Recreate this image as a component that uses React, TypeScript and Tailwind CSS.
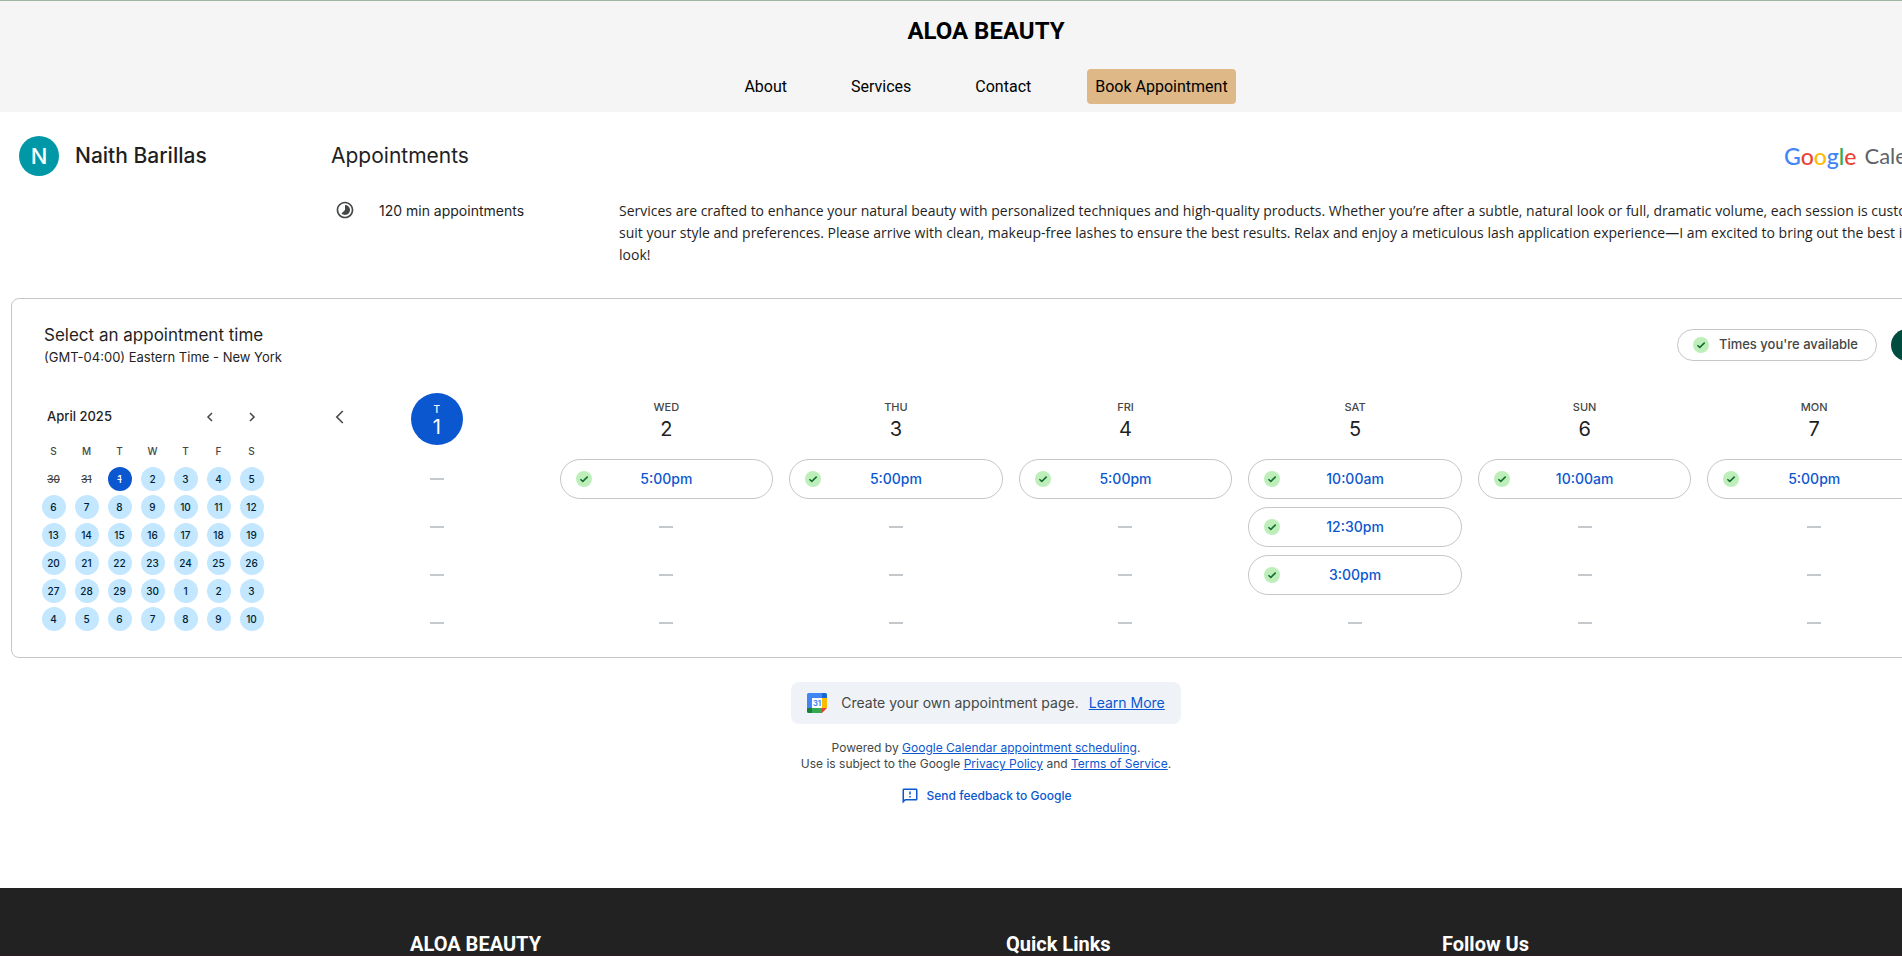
import React from "react";
import { MdTimelapse, MdOutlineFeedback } from "react-icons/md";

const WEEKDAYS = ["S", "M", "T", "W", "T", "F", "S"];

type MiniDay = { day: number; state: "past" | "selected" | "open" };

const MINI_DAYS: MiniDay[] = [
  { day: 30, state: "past" },
  { day: 31, state: "past" },
  { day: 1, state: "selected" },
  ...Array.from({ length: 29 }, (_, i): MiniDay => ({ day: i + 2, state: "open" })),
  ...Array.from({ length: 10 }, (_, i): MiniDay => ({ day: i + 1, state: "open" })),
];

const MINI_STYLES: Record<MiniDay["state"], string> = {
  past: "text-[#444746] line-through",
  selected: "bg-[#0b57d0] text-white line-through",
  open: "bg-[#c2e7ff] text-[#001d35]",
};

const DAYS: { name: string; date: number; today?: boolean; slots: (string | null)[] }[] = [
  { name: "T", date: 1, today: true, slots: [null, null, null, null] },
  { name: "WED", date: 2, slots: ["5:00pm", null, null, null] },
  { name: "THU", date: 3, slots: ["5:00pm", null, null, null] },
  { name: "FRI", date: 4, slots: ["5:00pm", null, null, null] },
  { name: "SAT", date: 5, slots: ["10:00am", "12:30pm", "3:00pm", null] },
  { name: "SUN", date: 6, slots: ["10:00am", null, null, null] },
  { name: "MON", date: 7, slots: ["5:00pm", null, null, null] },
];

function CheckBadge() {
  return (
    <svg className="size-4 shrink-0" viewBox="0 0 16 16" aria-hidden="true">
      <circle cx="8" cy="8" r="8" fill="#beefbb" />
      <path d="M4.4 8.2 L6.8 10.4 L11.7 5.6" fill="none" stroke="#146c2e" strokeWidth="1.5" />
    </svg>
  );
}

function Chevron({ right = false }: { right?: boolean }) {
  return (
    <svg className="size-3" viewBox="0 0 12 12" aria-hidden="true">
      <path
        d={right ? "M4 2 L8 6 L4 10" : "M8 2 L4 6 L8 10"}
        fill="none"
        stroke="#444746"
        strokeWidth="1.5"
      />
    </svg>
  );
}

function CalendarIcon() {
  return (
    <svg className="size-5" viewBox="0 0 20 20" aria-hidden="true">
      <path d="M1.5 0H15v5H5v10H0V1.5A1.5 1.5 0 0 1 1.5 0Z" fill="#4285f4" />
      <path d="M15 0h3.5A1.5 1.5 0 0 1 20 1.5V5h-5Z" fill="#1967d2" />
      <path d="M15 5h5v10h-5Z" fill="#fbbc04" />
      <path d="M5 15h10v5H5Z" fill="#34a853" />
      <path d="M0 15h5v5H1.5A1.5 1.5 0 0 1 0 18.5Z" fill="#188038" />
      <path d="M15 15h5l-5 5Z" fill="#ea4335" />
      <path d="M5 5h10v10H5Z" fill="#fff" />
      <text
        x="10"
        y="12.8"
        textAnchor="middle"
        fontFamily="Inter, sans-serif"
        fontSize="7.5"
        fontWeight="700"
        fill="#4285f4"
      >
        31
      </text>
    </svg>
  );
}

function SiteHeader() {
  return (
    <header className="flex h-28 shrink-0 flex-col items-center border-t border-[#9fb59f] bg-[#f5f5f5] pt-3.5 font-[Roboto,sans-serif] text-black">
      <h1 className="text-2xl leading-8 font-bold">ALOA BEAUTY</h1>
      <nav className="mt-[22px] flex gap-12 text-base">
        <a href="#about" className="rounded px-2 py-1.5 leading-[23px]">About</a>
        <a href="#services" className="rounded px-2 py-1.5 leading-[23px]">Services</a>
        <a href="#contact" className="rounded px-2 py-1.5 leading-[23px]">Contact</a>
        <a href="#book" className="rounded bg-[#deb887] px-2 py-1.5 leading-[23px]">Book Appointment</a>
      </nav>
    </header>
  );
}

function Intro() {
  return (
    <section className="grid grid-cols-[312px_1fr] pt-6 pr-6 pl-[19px]">
      <div className="flex h-10 items-center gap-4">
        <div className="flex size-10 items-center justify-center rounded-full bg-[#0097a7] text-[22px] font-medium text-white">
          N
        </div>
        <h2 className="text-[21px] font-medium">Naith Barillas</h2>
      </div>
      <div>
        <div className="flex h-10 items-center justify-between">
          <h2 className="text-[21px]">Appointments</h2>
          <div className="flex w-[164px] items-center gap-2">
            <span className="font-[Lato,sans-serif] text-[23px] leading-7 font-medium">
              <span className="text-[#4285f4]">G</span>
              <span className="text-[#ea4335]">o</span>
              <span className="text-[#fbbc04]">o</span>
              <span className="text-[#4285f4]">g</span>
              <span className="text-[#34a853]">l</span>
              <span className="text-[#ea4335]">e</span>
            </span>
            <span className="font-[Lato,sans-serif] text-[22px] leading-7 text-[#5f6368]">Calendar</span>
          </div>
        </div>
        <div className="mt-6 flex">
          <div className="flex w-[288px] shrink-0 items-start text-sm leading-[21px]">
            <MdTimelapse className="ml-1 size-5 text-[#444746]" />
            <span className="ml-6">120 min appointments</span>
          </div>
          <p className="-mr-5 font-[Open_Sans,sans-serif] text-sm leading-[22px]">
            Services are crafted to enhance your natural beauty with personalized techniques and
            high-quality products. Whether you’re after a subtle, natural look or full, dramatic
            volume, each session is customized to suit your style and preferences. Please arrive
            with clean, makeup-free lashes to ensure the best results. Relax and enjoy a meticulous
            lash application experience—I am excited to bring out the best in your look!
          </p>
        </div>
      </div>
    </section>
  );
}

function MiniCalendar() {
  return (
    <div className="w-[231px] shrink-0 pt-2">
      <div className="flex h-8 items-center">
        <span className="ml-2.5 flex-1 text-[13px] font-medium">April 2025</span>
        <button type="button" aria-label="Previous month" className="flex size-8 items-center justify-center">
          <Chevron />
        </button>
        <button type="button" aria-label="Next month" className="ml-2.5 flex size-8 items-center justify-center">
          <Chevron right />
        </button>
      </div>
      <div className="mt-2 grid grid-cols-7 text-center text-[10px] leading-5 font-medium text-[#444746]">
        {WEEKDAYS.map((d, i) => (
          <span key={i}>{d}</span>
        ))}
      </div>
      <div className="mt-1.5 grid grid-cols-7 justify-items-center gap-y-1">
        {MINI_DAYS.map(({ day, state }, i) => (
          <button
            key={i}
            type="button"
            className={`flex size-6 items-center justify-center rounded-full text-[10px] font-medium ${MINI_STYLES[state]}`}
          >
            {day}
          </button>
        ))}
      </div>
    </div>
  );
}

function WeekGrid() {
  return (
    <div className="relative grid flex-1 grid-cols-7">
      <button type="button" aria-label="Previous week" className="absolute top-3 left-1.5 p-1">
        <svg className="size-4" viewBox="0 0 16 16" aria-hidden="true">
          <path d="M10.8 2 L4.8 8 L10.8 14" fill="none" stroke="#444746" strokeWidth="1.6" />
        </svg>
      </button>
      {DAYS.map(({ name, date, today, slots }) => (
        <div key={date} className="px-2">
          <div className="flex h-[66px] flex-col items-center">
            {today ? (
              <div className="flex size-13 flex-col items-center rounded-full bg-[#0b57d0] pt-2.5 text-white">
                <span className="text-[10px] leading-3 font-medium">{name}</span>
                <span className="text-xl leading-6">{date}</span>
              </div>
            ) : (
              <div className="flex flex-col items-center gap-1 pt-2">
                <span className="text-[11px] leading-3 font-medium text-[#444746]">{name}</span>
                <span className="text-xl leading-6">{date}</span>
              </div>
            )}
          </div>
          <div className="flex flex-col gap-2">
            {slots.map((slot, i) =>
              slot ? (
                <button
                  key={i}
                  type="button"
                  className="grid h-10 grid-cols-[16px_1fr_16px] items-center rounded-full border border-[#c4c7c5] px-[15px] text-sm font-medium text-[#0b57d0]"
                >
                  <CheckBadge />
                  <span>{slot}</span>
                </button>
              ) : (
                <div key={i} className="flex h-10 items-center justify-center">
                  <span className="h-0.5 w-3.5 bg-[#c4c9cd]" />
                </div>
              )
            )}
          </div>
        </div>
      ))}
    </div>
  );
}

function Scheduler() {
  return (
    <section className="mx-[11px] mt-8 rounded-lg border border-[#c4c7c5] pt-6 pr-[31px] pb-3.5">
      <div className="flex items-center pl-8">
        <div>
          <h3 className="text-[17px] leading-6">Select an appointment time</h3>
          <p className="text-[13px] leading-5">(GMT-04:00) Eastern Time - New York</p>
        </div>
        <div className="ml-auto flex items-center gap-3.5">
          <div className="flex h-8 items-center gap-2.5 rounded-full border border-[#c4c7c5] pr-[18px] pl-[15px] text-[13px] font-medium text-[#444746]">
            <CheckBadge />
            Times you're available
          </div>
          <button type="button" aria-label="Add a calendar" className="h-8 w-[38px] rounded-full bg-[#004d40]" />
        </div>
      </div>
      <div className="mt-[26px] flex gap-[54px] pl-[25px]">
        <MiniCalendar />
        <WeekGrid />
      </div>
    </section>
  );
}

function Credits() {
  return (
    <section className="flex flex-col items-center pt-6 pb-21 text-[#444746]">
      <div className="flex h-[42px] items-center rounded-lg bg-[#eff3f8] px-4 text-sm">
        <CalendarIcon />
        <span className="ml-3.5">Create your own appointment page.</span>
        <a href="#learn" className="ml-2.5 text-[#0b57d0] underline">Learn More</a>
      </div>
      <p className="mt-4 text-center text-xs leading-4">
        Powered by{" "}
        <a href="#scheduling" className="text-[#0b57d0] underline">Google Calendar appointment scheduling</a>.
        <br />
        Use is subject to the Google{" "}
        <a href="#privacy" className="text-[#0b57d0] underline">Privacy Policy</a> and{" "}
        <a href="#terms" className="text-[#0b57d0] underline">Terms of Service</a>.
      </p>
      <a href="#feedback" className="mt-4 flex h-4 items-center gap-2 text-xs font-medium text-[#0b57d0]">
        <MdOutlineFeedback className="size-[18px]" />
        Send feedback to Google
      </a>
    </section>
  );
}

function SiteFooter() {
  return (
    <footer className="flex min-h-0 flex-1 justify-center border-b border-[#2b1f27] bg-[#222222] pt-11 font-[Roboto,sans-serif] text-xl leading-6 font-bold text-white">
      <div className="grid w-full max-w-[1152px] grid-cols-[596px_436px_1fr]">
        <h4>ALOA BEAUTY</h4>
        <h4>Quick Links</h4>
        <h4>Follow Us</h4>
      </div>
    </footer>
  );
}

export default function App() {
  return (
    <div className="h-screen overflow-hidden bg-white font-[Inter,sans-serif] text-[#1f1f1f]">
      <div className="flex h-full w-[calc(100%+70px)] flex-col">
        <SiteHeader />
        <main className="shrink-0">
          <Intro />
          <Scheduler />
          <Credits />
        </main>
        <SiteFooter />
      </div>
    </div>
  );
}
